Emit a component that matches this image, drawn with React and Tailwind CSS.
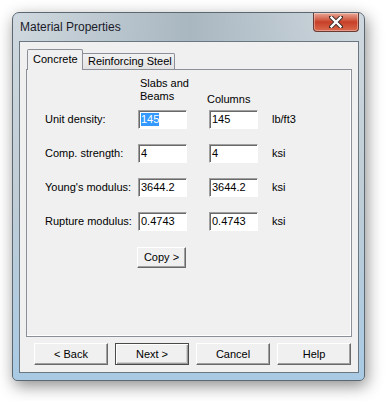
import React from 'react'

const rows = [
  { label: 'Unit density:', slab: '145', col: '145', unit: 'lb/ft3', selected: true },
  { label: 'Comp. strength:', slab: '4', col: '4', unit: 'ksi' },
  { label: "Young's modulus:", slab: '3644.2', col: '3644.2', unit: 'ksi' },
  { label: 'Rupture modulus:', slab: '0.4743', col: '0.4743', unit: 'ksi' }
]

function Field({ value, selected }) {
  return (
    <div className="w-[49px] h-[19px] bg-white border border-t-[#a0a0a0] border-l-[#a0a0a0] border-r-white border-b-white shadow-[inset_1px_1px_0_#696969] flex items-center pl-[2px]">
      {selected ? (
        <span className="bg-[#3399ff] text-white leading-[13px]">{value}</span>
      ) : (
        <span className="leading-[13px]">{value}</span>
      )}
    </div>
  )
}

function Button({ children, wide, isDefault }) {
  return (
    <div
      className={
        'flex items-center justify-center bg-[#f0f0f0] border ' +
        (isDefault
          ? 'border-[#4a4a4a] shadow-[inset_1px_1px_0_#fff,inset_-1px_-1px_0_#9a9a9a,inset_-2px_-2px_0_#d0d0d0] '
          : 'border-t-white border-l-white border-r-[#696969] border-b-[#696969] shadow-[inset_-1px_-1px_0_#a0a0a0] ') +
        (wide ? 'w-[74px] h-[22px]' : 'w-[49px] h-[21px]')
      }
    >
      {children}
    </div>
  )
}

export default function App() {
  return (
    <div
      className="w-[386px] h-[401px] bg-white pt-[12px] pl-[12px] text-[11px] text-black"
      style={{ fontFamily: '"Liberation Sans", Arial, sans-serif' }}
    >
      {/* window frame */}
      <div className="w-[353px] h-[369px] rounded-t-[7px] rounded-b-[5px] border border-[#5b6872] bg-gradient-to-b from-[#cfd8de] via-[#bfcdd6] to-[#a9cae4] shadow-[2px_5px_16px_rgba(0,0,0,0.45)] pl-[6px] pr-[5px] pb-[7px] flex flex-col">
        {/* title bar */}
        <div className="h-[28px] flex items-start justify-between bg-gradient-to-r from-transparent via-[#a9b7c1] to-transparent">
          <div className="pt-[7px] pl-[1px] text-[12px] text-[#1a1a2a] leading-[15px]">
            Material Properties
          </div>
          <div className="w-[46px] h-[19px] rounded-b-[4px] border border-t-0 border-[#6b3a32] bg-gradient-to-b from-[#e9a898] via-[#c73f27] to-[#d9684c] flex items-center justify-center shadow-[inset_0_0_0_1px_rgba(255,255,255,0.35)]">
            <svg width="14" height="12" viewBox="0 0 14 12">
              <path d="M2 1 L12 11 M12 1 L2 11" stroke="#3b2b28" strokeWidth="4.2" strokeLinecap="round" />
              <path d="M2.5 1.5 L11.5 10.5 M11.5 1.5 L2.5 10.5" stroke="#ffffff" strokeWidth="2.4" strokeLinecap="square" />
            </svg>
          </div>
        </div>

        {/* client area */}
        <div className="w-[340px] h-[332px] border border-[#6b7780] bg-[#f0f0f0] px-[6px] pt-[7px] pb-[7px] flex flex-col">
          {/* tabs */}
          <div className="h-[20px] flex items-end pl-[1px] relative z-10">
            <div className="w-[56px] h-[21px] -mb-[1px] bg-[#f0f0f0] border border-b-0 border-[#8b8f97] rounded-t-[2px] pl-[5px] pt-[3px] leading-[13px]">
              Concrete
            </div>
            <div className="w-[92px] h-[16px] bg-gradient-to-b from-[#f2f2f2] to-[#e3e3e3] border border-b-0 border-l-0 border-[#8b8f97] rounded-tr-[2px] pl-[5px] pt-[1px] leading-[13px]">
              Reinforcing Steel
            </div>
          </div>

          {/* tab panel */}
          <div className="h-[268px] border border-[#8b8f97] shadow-[inset_-1px_-1px_0_#fff] flex flex-col">
            <div className="flex mt-[7px] h-[26px]">
              <div className="ml-[113px] w-[60px] leading-[13px]">
                Slabs and
                <br />
                Beams
              </div>
              <div className="ml-[7px] mt-[16px] leading-[13px]">Columns</div>
            </div>
            <div className="flex flex-col gap-[15px] mt-[7px]">
              {rows.map((r) => (
                <div key={r.label} className="flex items-center h-[19px]">
                  <div className="pl-[18px] w-[111px]">{r.label}</div>
                  <Field value={r.slab} selected={r.selected} />
                  <div className="ml-[22px]">
                    <Field value={r.col} />
                  </div>
                  <div className="ml-[14px]">{r.unit}</div>
                </div>
              ))}
            </div>
            <div className="mt-[16px] ml-[110px]">
              <Button>Copy &gt;</Button>
            </div>
          </div>

          {/* buttons */}
          <div className="mt-[6px] pl-[8px] flex gap-[7px]">
            <Button wide>&lt; Back</Button>
            <Button wide isDefault>Next &gt;</Button>
            <Button wide>Cancel</Button>
            <Button wide>Help</Button>
          </div>
        </div>
      </div>
    </div>
  )
}
